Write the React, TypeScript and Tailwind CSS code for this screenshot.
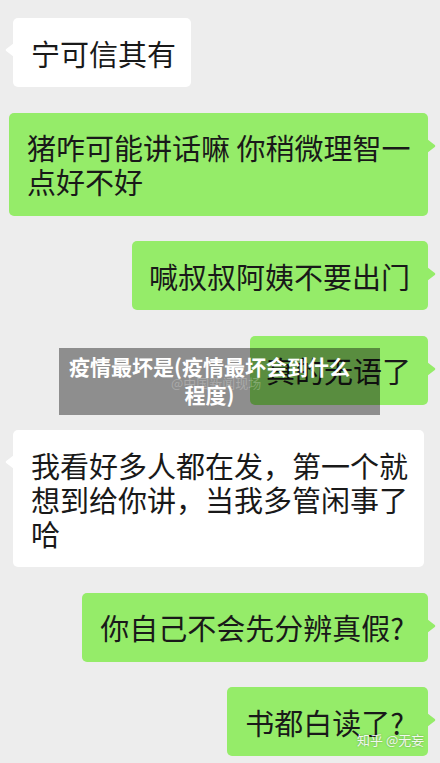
import type { ReactNode } from 'react';

const font = { fontFamily: '"Noto Sans CJK SC", "Noto Sans", sans-serif' };

interface BubbleProps {
    side: 'left' | 'right';
    className?: string;
    children: ReactNode;
}

function Bubble({ side, className, children }: BubbleProps) {
    const isLeft = side === 'left';
    return (
        <div
            className={
                'relative rounded-[5px] py-[17.5px] text-[29px] leading-[34px] text-[#191919] ' +
                (isLeft ? 'self-start ml-[13px] bg-white ' : 'self-end mr-[12px] bg-[#95ec69] ') +
                (className ?? '')
            }
        >
            {children}
            {isLeft ? (
                <svg className="absolute left-[-8px] top-[25px]" width="9" height="14" viewBox="0 0 9 14">
                    <path d="M9 0 L1.2 6 Q0 7 1.2 8 L9 14 Z" fill="#ffffff" />
                </svg>
            ) : (
                <svg className="absolute right-[-8px] top-[26px]" width="9" height="14" viewBox="0 0 9 14">
                    <path d="M0 0 L7.8 6 Q9 7 7.8 8 L0 14 Z" fill="#95ec69" />
                </svg>
            )}
        </div>
    );
}

export default function App() {
    return (
        <div className="relative h-[763px] w-[440px] overflow-hidden bg-[#ededed]" style={font}>
            <div className="flex flex-col gap-[25.5px] pt-[18px]">
                <Bubble side="left" className="pl-[18px] pr-[15px]">宁可信其有</Bubble>
                <Bubble side="right" className="w-[419px] pl-[18px] pr-[10px]">
                    猪咋可能讲话嘛 你稍微理智一
                    <br />
                    点好不好
                </Bubble>
                <Bubble side="right" className="pl-[17px] pr-[18px]">喊叔叔阿姨不要出门</Bubble>
                <Bubble side="right" className="pl-[16px] pr-[17px]">真的无语了</Bubble>
                <Bubble side="left" className="w-[411px] pl-[18px] pr-[10px]">
                    我看好多人都在发，第一个就
                    <br />
                    想到给你讲，当我多管闲事了
                    <br />
                    哈
                </Bubble>
                <Bubble side="right" className="pl-[18px] pr-[24px]">你自己不会先分辨真假?</Bubble>
                <Bubble side="right" className="pl-[18px] pr-[24px]">书都白读了?</Bubble>
            </div>

            <div className="absolute left-[59px] top-[348px] h-[67px] w-[321px] bg-black/40 pb-[7px] pl-[6px] pr-[26px] pt-[4px] text-center text-[21px] font-bold leading-[28px] text-white">
                疫情最坏是(疫情最坏会到什么
                <br />
                程度)
                <span className="absolute left-[112px] top-[27px] text-[13px] font-normal leading-[16px] text-white/25">
                    @中国新闻现场
                </span>
            </div>

            <div className="absolute left-[357px] top-[731px] text-[13px] leading-[18px] text-white/90 [text-shadow:0_0_2px_rgba(0,0,0,0.35)]">
                知乎 @无妄
            </div>
        </div>
    );
}
